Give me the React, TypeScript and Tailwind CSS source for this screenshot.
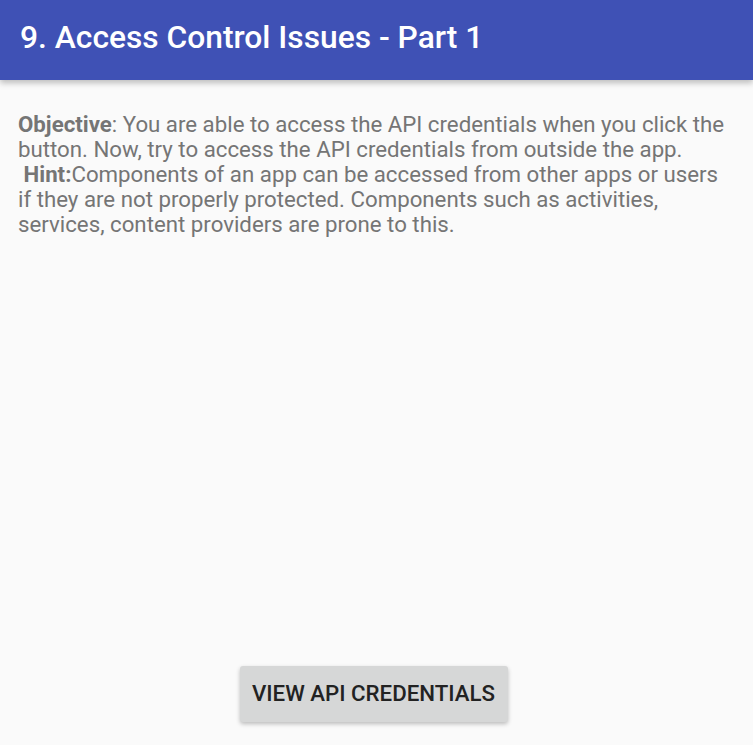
import React from "react";

const App = () => {
  return (
    <div className="min-h-[745px] w-[753px] bg-[#fafafa] flex flex-col font-['Roboto',sans-serif] overflow-hidden">
      <header className="h-[80px] bg-[#3f51b5] flex items-center px-5 shadow-[0_3px_6px_rgba(0,0,0,0.25)] relative z-10">
        <h1 className="text-white text-[31.75px] font-medium pb-1">
          9. Access Control Issues - Part 1
        </h1>
      </header>

      <main className="flex-1 flex flex-col pl-[18px] pr-[24px] pt-[32px]">
        <p className="text-[#757575] text-[22.25px] leading-[25px]">
          <b className="font-bold">Objective</b>: You are able to access the API credentials when you click the button. Now, try to access the API credentials from outside the app.
          <br />
          <b className="font-bold">&nbsp;Hint:</b>Components of an app can be accessed from other apps or users if they are not properly protected. Components such as activities, services, content providers are prone to this.
        </p>

        <div className="flex-1" />

        <div className="flex justify-center pb-[23px]">
          <button className="w-[268px] h-[56px] bg-[#d6d7d7] rounded-[3px] text-[#222] text-[22.25px] font-medium shadow-[0_2px_4px_rgba(0,0,0,0.25)]">
            VIEW API CREDENTIALS
          </button>
        </div>
      </main>
    </div>
  );
};

export default App;
